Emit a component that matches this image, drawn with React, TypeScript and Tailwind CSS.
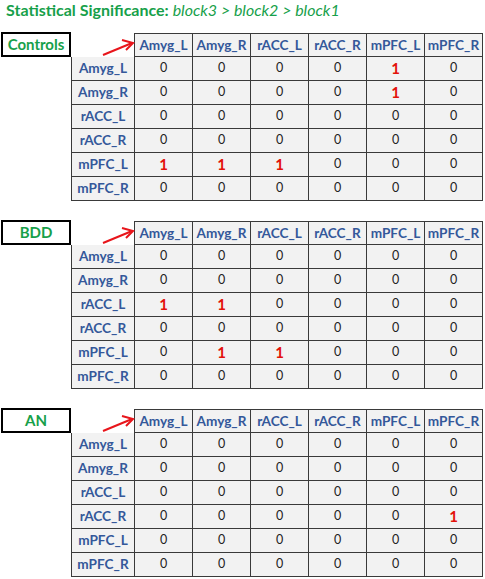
import React from "react";

const cols = ["Amyg_L", "Amyg_R", "rACC_L", "rACC_R", "mPFC_L", "mPFC_R"];

type Section = { name: string; ones: [number, number][] };

const sections: Section[] = [
  { name: "Controls", ones: [[0, 4], [1, 4], [4, 0], [4, 1], [4, 2]] },
  { name: "BDD", ones: [[2, 0], [2, 1], [4, 1], [4, 2]] },
  { name: "AN", ones: [[3, 5]] },
];

function Arrow() {
  return (
    <svg className="absolute left-0 top-0" width="64" height="24" viewBox="0 0 64 24">
      <line x1="32" y1="22" x2="61" y2="10" stroke="#e8151b" strokeWidth="2" />
      <path d="M51 7 L62 10 L55 17" fill="none" stroke="#e8151b" strokeWidth="2" />
    </svg>
  );
}

function Block({ s }: { s: Section }) {
  const isOne = (r: number, c: number) => s.ones.some(([a, b]) => a === r && b === c);
  return (
    <div className="grid grid-cols-[70px_64px_repeat(6,58px)] pl-px">
      <div className="h-[25px] flex items-center justify-center border-2 border-black -mt-px box-border text-[15px] font-bold text-[#17a04a]">
        {s.name}
      </div>
      <div className="relative h-[24px] border-r border-[#3a3a3a]">
        <Arrow />
      </div>
      {cols.map((c) => (
        <div
          key={c}
          className="h-[24px] flex items-center justify-center border-t border-r border-b border-[#3a3a3a] bg-[#f2f2f2] text-[13.6px] font-bold text-[#34589a]"
        >
          {c}
        </div>
      ))}
      {cols.map((r, ri) => (
        <React.Fragment key={r}>
          <div className="h-[24px]" />
          <div className="h-[24px] flex items-center justify-center border-l border-r border-b border-[#3a3a3a] bg-[#f2f2f2] text-[13.6px] font-bold text-[#34589a]">
            {r}
          </div>
          {cols.map((c, ci) =>
            isOne(ri, ci) ? (
              <div
                key={c}
                className="h-[24px] flex items-center justify-center border-r border-b border-[#3a3a3a] bg-[#f2f2f2] text-[15px] font-bold text-[#e3120b]"
              >
                1
              </div>
            ) : (
              <div
                key={c}
                className="h-[24px] flex items-center justify-center border-r border-b border-[#3a3a3a] bg-[#f2f2f2] text-[12.5px] text-[#222]"
              >
                0
              </div>
            )
          )}
        </React.Fragment>
      ))}
    </div>
  );
}

export default function App() {
  return (
    <div className="w-[485px] h-[579px] bg-white" style={{ fontFamily: "Lato, 'Open Sans', sans-serif" }}>
      <div className="h-[33px] pl-[6px] pt-[1px] text-[16px] leading-[18px] text-[#17a04a]">
        <span className="font-bold">Statistical Significance: </span>
        <span className="italic">block3 &gt; block2 &gt; block1</span>
      </div>
      <div className="flex flex-col gap-[20px]">
        {sections.map((s) => (
          <Block key={s.name} s={s} />
        ))}
      </div>
    </div>
  );
}
